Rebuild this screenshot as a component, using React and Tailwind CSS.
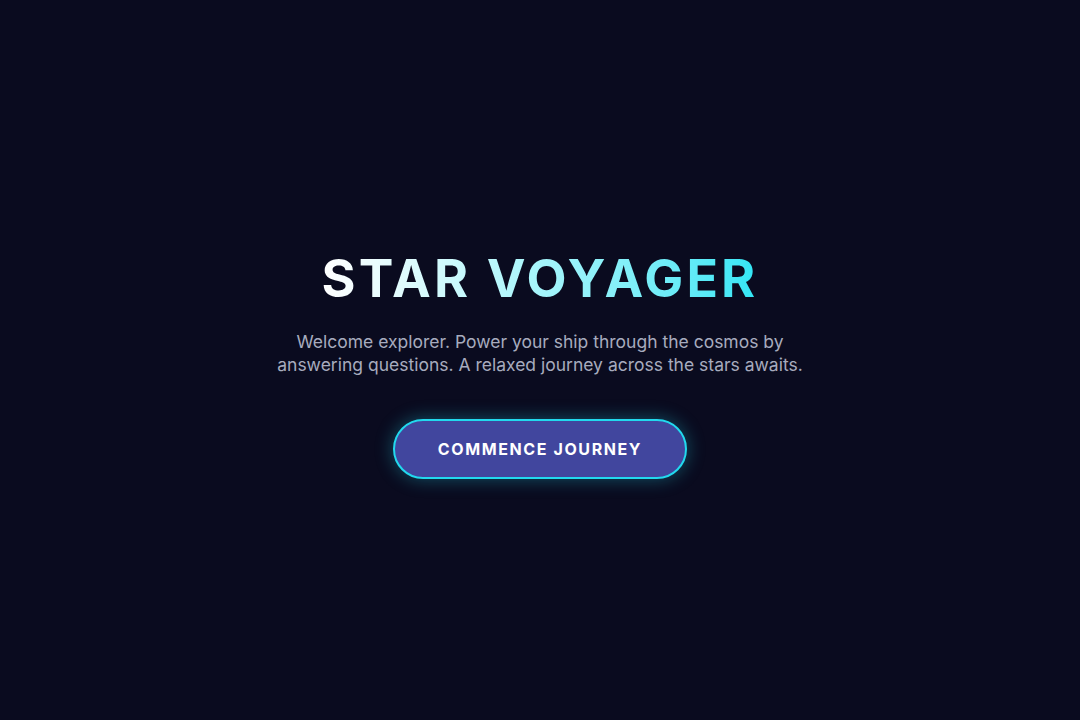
export default function App() {
  return (
    <div
      className="min-h-screen w-full flex flex-col items-center justify-center bg-[#0a0b1f] px-4 pt-[11px]"
      style={{ fontFamily: "Inter, 'Liberation Sans', sans-serif" }}
    >
      <div className="flex flex-col items-center text-center">
        {/* TITLE */}
        <h1 className="text-[52px] leading-none font-bold tracking-[0.06em] bg-gradient-to-r from-white via-[#a5f5fb] to-[#2ee6f5] bg-clip-text text-transparent">
          STAR VOYAGER
        </h1>

        <p className="mt-[25px] max-w-[560px] text-[17.5px] leading-[23px] text-[#a7abbe]">
          Welcome explorer. Power your ship through the cosmos by answering
          questions. A relaxed journey across the stars awaits.
        </p>

        {/* BUTTON */}
        <button className="mt-[43px] w-[294px] h-[60px] rounded-full bg-[#41469e] border-2 border-[#22d9ee] text-white font-bold text-[16px] tracking-[0.1em] shadow-[0_0_18px_rgba(34,217,238,0.35)]">
          COMMENCE JOURNEY
        </button>
      </div>
    </div>
  );
}
